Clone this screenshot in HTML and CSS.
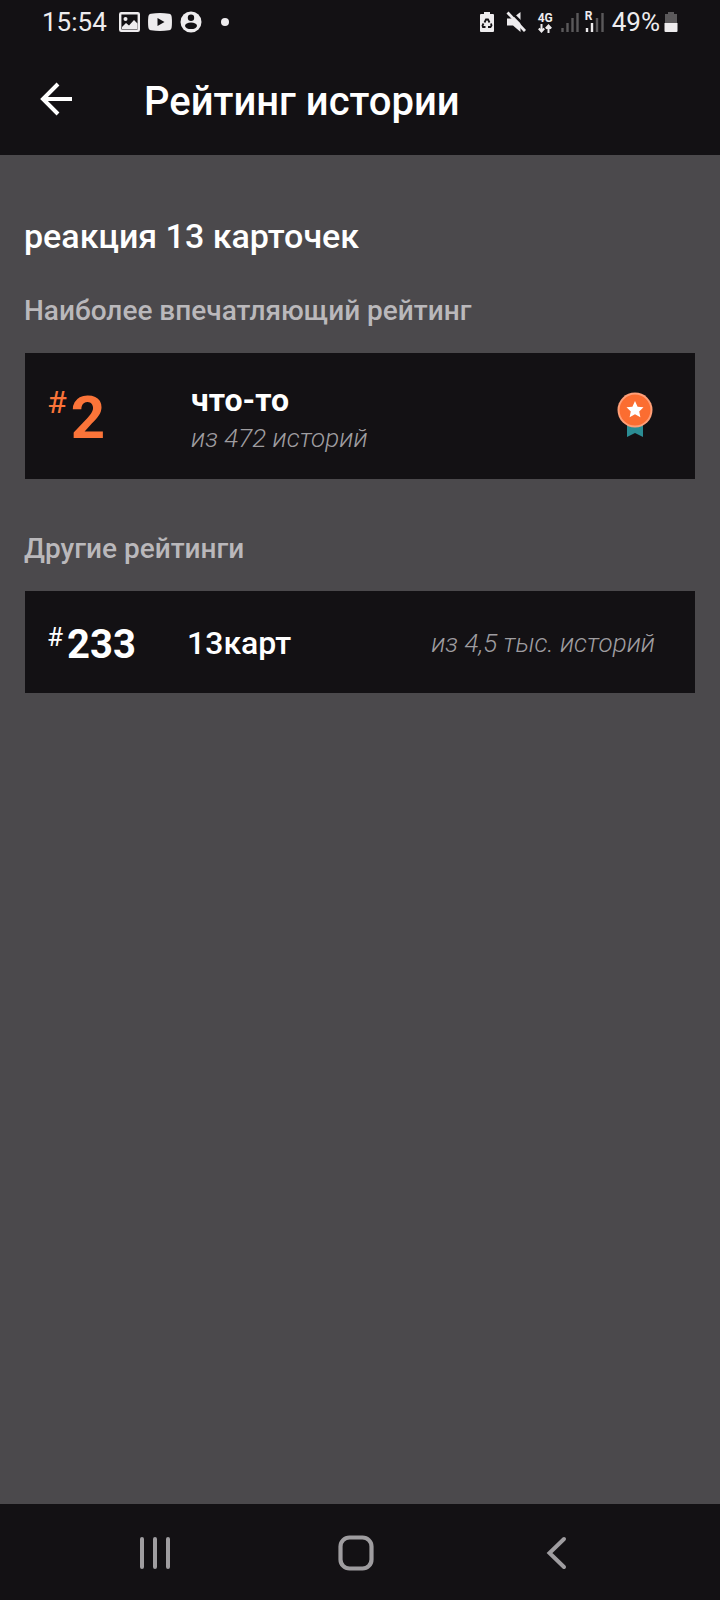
FILE: index.html
```html
<!DOCTYPE html>
<html lang="ru">

<head>
    <meta charset="UTF-8">
    <meta name="viewport" content="width=device-width, initial-scale=1.0">
    <title>Рейтинг истории</title>
    <link rel="stylesheet" href="styles.css">
</head>

<body>

    <!-- Status Bar -->
    <div class="status-bar">
        <span class="status-text">15:54</span>
        <svg class="icon-photo" width="22" height="20" viewBox="0 0 22 20">
            <rect x="1.2" y="1.2" width="18.6" height="17.6" rx="1" fill="none" stroke="#eeecee" stroke-width="2.4" />
            <circle cx="6.5" cy="7" r="2" fill="#eeecee" />
            <path d="M3 15 L7 11 L10 13.5 L15 8 L18.500 11.500 V17 H3 Z" fill="#eeecee" />
        </svg>
        <svg class="icon-video" width="24" height="18" viewBox="0 0 24 18">
            <path d="M3 .7 Q12 -.5 21 .7 Q23.500 1 23.700 4 Q24.200 9 23.700 14 Q23.500 17 21 17.300 Q12 18.500 3 17.300 Q.5 17 .3 14 Q-.2 9 .3 4 Q.5 1 3 .7 Z" fill="#eeecee" />
            <path d="M9.500 5 L16.500 9 L9.500 13 Z" fill="#131114" />
        </svg>
        <svg class="icon-user" width="22" height="22" viewBox="0 0 22 22">
            <circle cx="11" cy="11" r="10.500" fill="#eeecee" />
            <circle cx="11" cy="6.700" r="3.200" fill="#131114" />
            <ellipse cx="11" cy="14.800" rx="6" ry="3.300" fill="#131114" />
        </svg>
        <span class="status-dot"></span>

        <div class="status-right">
            <svg width="16" height="22" viewBox="0 0 16 22">
                <path d="M5 1 H11 V3 H14 Q15 3 15 4 V20 Q15 21 14 21 H2 Q1 21 1 20 V4 Q1 3 2 3 H5 Z" fill="#eeecee" />
                <path d="M5.500 11.500 L7 8.500 H9 L10.500 11.500 M12 12.500 L12.500 14.500 L11.500 16 H9 M6.500 16 H4 L3.500 14.500 L4.500 12.500" fill="none" stroke="#131114" stroke-width="1.800" />
            </svg>
            <svg class="icon-mute" width="22" height="22" viewBox="0 0 22 22">
                <path d="M1 7.500 H6 L14.500 1 V21 L7 14.500 H1 Z" fill="#eeecee" />
                <path d="M3.500 -.5 L21.500 17.500" stroke="#131114" stroke-width="2.500" />
                <path d="M1.500 1.500 L19 20" stroke="#eeecee" stroke-width="2.800" />
            </svg>
            <div class="network">
                <span>4G</span>
                <svg width="14" height="9" viewBox="0 0 14 9">
                    <path d="M3.500 0 V7.500 M.8 4.500 L3.500 7.500 L6.200 4.500 M10.500 9 V1.500 M7.800 4.500 L10.500 1.500 L13.200 4.500" fill="none" stroke="#eeecee" stroke-width="2" />
                </svg>
            </div>
            <svg class="icon-signal" width="18" height="20" viewBox="0 0 18 20">
                <path d="M1.500 16 V20 M6.500 11 V20 M11.500 6 V20 M16.500 1 V20" stroke="#5b595b" stroke-width="2.400" />
            </svg>
            <div class="roaming">
                <svg width="19" height="20" viewBox="0 0 19 20">
                    <path d="M2 16 V20 M7 11 V20" stroke="#eeecee" stroke-width="2.400" />
                    <path d="M12 6 V20 M17.500 1 V20" stroke="#5b595b" stroke-width="2.400" />
                </svg>
                <span>R</span>
            </div>
            <span class="status-text">49%</span>
            <svg class="icon-battery" width="14" height="22" viewBox="0 0 14 22">
                <path d="M4 1 H10 V3 H13 V12 H1 V3 H4 Z" fill="#5b595b" />
                <path d="M0.500 12 H13.500 V20 Q13.500 21 12.500 21 H1.500 Q.5 21 .5 20 Z" fill="#eeecee" />
            </svg>
        </div>
    </div>

    <!-- Header -->
    <header class="header">
        <button class="back-button" aria-label="Назад">
            <svg width="32" height="34" viewBox="0 0 32 34">
                <path d="M32 17 H3 M18 2 L3 17 L18 32" fill="none" stroke="#fff" stroke-width="4" />
            </svg>
        </button>
        <h1>Рейтинг истории</h1>
    </header>

    <main class="content">
        <h2>реакция 13 карточек</h2>

        <h3>Наиболее впечатляющий рейтинг</h3>
        <div class="card card-best">
            <div class="rank"><span class="hash">#</span><span class="number">2</span></div>
            <div class="info">
                <div class="tag">что-то</div>
                <div class="total">из 472 историй</div>
            </div>
            <svg class="medal" width="36" height="46" viewBox="0 0 36 46">
                <path d="M10 30 H26 V45 L18 41 L10 45 Z" fill="#2b8d94" />
                <circle cx="18" cy="18" r="17.500" fill="#ff9f78" />
                <circle cx="18" cy="18" r="15.500" fill="#fb6d31" />
                <path d="M18 9 L20.600 14.700 L26.500 15.300 L22.200 19.400 L23.400 25.300 L18 22.300 L12.600 25.300 L13.800 19.400 L9.500 15.300 L15.400 14.700 Z" fill="#fff" />
            </svg>
        </div>

        <h3>Другие рейтинги</h3>
        <div class="card">
            <div class="rank"><span class="hash">#</span><span class="number">233</span></div>
            <div class="info">
                <div class="tag">13карт</div>
            </div>
            <div class="total">из 4,5 тыс. историй</div>
        </div>
    </main>

    <!-- Navigation Bar -->
    <nav class="navbar">
        <button aria-label="Недавние">
            <svg width="36" height="36" viewBox="0 0 36 36">
                <path d="M5 4 V32 M18 4 V32 M31 4 V32" stroke="#9f9da0" stroke-width="4" stroke-linecap="round" />
            </svg>
        </button>
        <button aria-label="Главная">
            <svg width="36" height="36" viewBox="0 0 36 36">
                <rect x="2.500" y="2.500" width="31" height="31" rx="9" fill="none" stroke="#9f9da0" stroke-width="4.200" />
            </svg>
        </button>
        <button aria-label="Назад">
            <svg width="36" height="36" viewBox="0 0 36 36">
                <path d="M25 4 L10.500 18 L25 32" fill="none" stroke="#9f9da0" stroke-width="4" stroke-linecap="round" />
            </svg>
        </button>
    </nav>

</body>

</html>
```
FILE: styles.css
```css
/* Basic Reset */
* {
    margin: 0;
    padding: 0;
    box-sizing: border-box;
}

body {
    display: flex;
    flex-direction: column;
    min-height: 100vh;
    background-color: #4b494c;
    color: #fff;
    font-family: Roboto, 'Noto Sans', sans-serif;
}

svg {
    display: block;
    flex-shrink: 0;
}

button {
    background: none;
    border: none;
    cursor: pointer;
}

/* Status Bar */
.status-bar {
    display: flex;
    align-items: center;
    height: 44px;
    padding: 0 42px;
    background-color: #131114;
    color: #eeecee;
}

.status-text {
    font-size: 26px;
    line-height: 44px;
}

.icon-photo {
    margin-left: 12px;
}

.icon-video {
    margin-left: 7px;
}

.icon-user {
    margin-left: 8px;
}

.status-dot {
    width: 8px;
    height: 8px;
    margin-left: 19px;
    border-radius: 50%;
    background-color: #eeecee;
}

.status-right {
    display: flex;
    align-items: center;
    margin-left: auto;
}

.icon-mute {
    margin-left: 11px;
}

.network {
    display: flex;
    flex-direction: column;
    align-items: center;
    margin-left: 10px;
    font-size: 12px;
    font-weight: bold;
    line-height: 12px;
}

.icon-signal {
    margin-left: 8px;
}

.roaming {
    position: relative;
    margin: 0 8px 0 6px;
}

.roaming span {
    position: absolute;
    top: -2px;
    left: 0;
    font-size: 12px;
    font-weight: bold;
    line-height: 12px;
}

.icon-battery {
    margin-left: 4px;
}

/* Header */
.header {
    display: flex;
    align-items: center;
    height: 111px;
    padding: 4px 40px 0;
    background-color: #131114;
}

.back-button {
    margin-top: -6px;
}

h1 {
    margin-left: 72px;
    font-size: 40px;
    font-weight: 500;
    line-height: 48px;
}

/* Main Content Area */
.content {
    flex: 1;
    padding: 60px 24px;
}

h2 {
    font-size: 34px;
    font-weight: 500;
    line-height: 42px;
}

h3 {
    margin: 34px 0 22px;
    color: #bab8bb;
    font-size: 28px;
    font-weight: 500;
    line-height: 40px;
}

/* Rating Cards */
.card {
    display: flex;
    align-items: center;
    min-height: 102px;
    margin: 0 1px 50px;
    padding: 2px 40px 0 22px;
    background-color: #131114;
}

.rank {
    display: flex;
    align-items: flex-start;
    width: 140px;
    margin-top: 4px;
}

.number {
    margin-left: 4px;
    font-size: 40px;
    font-weight: bold;
    line-height: 48px;
}

.hash {
    font-size: 26px;
    line-height: 32px;
}

.info {
    flex: 1;
}

.tag {
    font-size: 32px;
    font-weight: 500;
    line-height: 40px;
}

.total {
    color: #9f9da0;
    font-size: 26px;
    font-style: italic;
    font-weight: 300;
    line-height: 36px;
}

.card-best {
    min-height: 126px;
    padding-right: 42px;
}

.card-best .rank {
    width: 144px;
    margin-top: 2px;
    color: #fb7439;
}

.card-best .number {
    font-size: 60px;
    line-height: 72px;
}

.card-best .hash {
    font-size: 32px;
    line-height: 40px;
}

.card-best .info {
    padding-top: 2px;
}

.card-best .tag {
    font-weight: bold;
}

.medal {
    margin-bottom: 4px;
}

/* Navigation Bar */
.navbar {
    display: grid;
    grid-template-columns: repeat(3, 1fr);
    align-items: center;
    height: 96px;
    padding: 2px 62px 0 54px;
    background-color: #131114;
}

.navbar button {
    display: flex;
    justify-content: center;
}
```
